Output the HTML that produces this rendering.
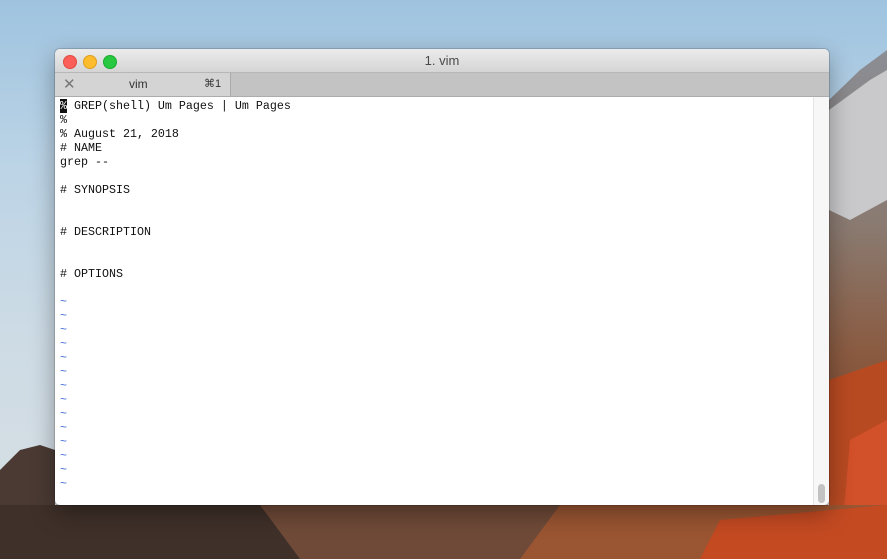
<!DOCTYPE html>
<html><head><style>
html,body{margin:0;padding:0;width:887px;height:559px;overflow:hidden;position:relative;font-family:"Liberation Sans",sans-serif}
.bg{position:absolute;inset:0;background:linear-gradient(180deg,#9fc3df 0%,#bcd4e6 30%,#cddbe5 60%,#d8dfe3 100%)}
svg.m{position:absolute;left:0;top:0}
.win{position:absolute;left:55px;top:49px;width:774px;height:456px;border-radius:5px;overflow:hidden;background:#fff;box-shadow:0 8px 24px rgba(0,0,0,.35),0 0 0 1px rgba(0,0,0,.15)}
.title{height:23px;background:linear-gradient(#ecebec,#d6d5d6);border-bottom:1px solid #b8b7b8;position:relative;text-align:center;font-size:13px;line-height:23px;color:#4a4a4a}
.dot{position:absolute;top:6px;width:12px;height:12px;border-radius:50%}
.tabs{height:23px;background:#c3c3c3;border-bottom:1px solid #acacac;position:relative}
.tab{position:absolute;left:0;top:0;width:175px;height:23px;background:#d4d4d4;border-right:1px solid #aaa;font-size:12px;line-height:23px;color:#333}
.term{position:absolute;left:5px;top:50px;font-family:"Liberation Mono",monospace;font-size:11.67px;line-height:14px;color:#111;white-space:pre}
.t{color:#4b6fd6}
.sb{position:absolute;right:0;top:48px;width:15px;bottom:0;background:#f7f7f7;border-left:1px solid #e4e4e4}
.th{position:absolute;left:4px;bottom:2px;width:7px;height:19px;border-radius:4px;background:#c2c2c2}
</style></head><body>
<div class="bg"></div>
<svg class="m" width="887" height="559">
<defs>
<linearGradient id="r" x1="0" y1="0" x2="0" y2="1"><stop offset="0" stop-color="#8b8e95"/><stop offset=".35" stop-color="#8a7a70"/><stop offset=".6" stop-color="#8a5a40"/><stop offset="1" stop-color="#6a3a25"/></linearGradient>
</defs>
<polygon points="829,100 860,70 887,50 887,559 829,559" fill="url(#r)"/>
<polygon points="829,110 870,80 887,70 887,200 850,220 829,210" fill="#c9c9cb"/>
<polygon points="829,380 887,360 887,559 829,559" fill="#b84a22"/>
<polygon points="850,440 887,420 887,559 840,559" fill="#d2502a"/>
<polygon points="0,470 20,450 40,445 55,450 55,559 0,559" fill="#4a3a33"/>
<rect x="0" y="505" width="887" height="54" fill="#6f4a38"/>
<polygon points="0,505 260,505 300,559 0,559" fill="#3f3029"/>
<polygon points="560,505 887,505 887,559 520,559" fill="#9a5532"/>
<polygon points="720,520 887,505 887,559 700,559" fill="#c44a22"/>
</svg>
<div class="win">
<div class="title">
<div class="dot" style="left:8px;background:#fc5f57;border:0.5px solid #de4a42"></div>
<div class="dot" style="left:28px;background:#fdbc2e;border:0.5px solid #dd9e1e"></div>
<div class="dot" style="left:48px;background:#28c840;border:0.5px solid #1ba92f"></div>
1. vim</div>
<div class="tabs"><div class="tab"><span style="position:absolute;left:8px;color:#777;font-size:15px">✕</span><span style="position:absolute;left:74px">vim</span><span style="position:absolute;left:149px;font-size:11px">⌘1</span></div></div>
<div class="term"><span style="background:#111;color:#fff">%</span> GREP(shell) Um Pages | Um Pages
%
% August 21, 2018
# NAME
grep --

# SYNOPSIS


# DESCRIPTION


# OPTIONS

<span class="t">~
~
~
~
~
~
~
~
~
~
~
~
~
~</span></div>
<div class="sb"><div class="th"></div></div>
</div>
</body></html>
